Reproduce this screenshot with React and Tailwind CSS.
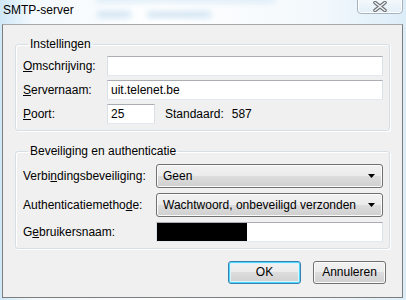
export default function App() {
  const inputCls =
    "flex items-center h-[20px] border border-t-[#abadb3] border-x-[#dbdfe6] border-b-[#e3e9ef] bg-white pl-[3px]";
  const selectCls =
    "flex h-[24px] w-[227px] items-center rounded-[3px] border border-[#707070] bg-[linear-gradient(#f2f2f2,#ebebeb_50%,#dddddd_50%,#cfcfcf)] pl-[6px] shadow-[inset_0_0_0_1px_#fbfbfb]";
  const Arrow = () => (
    <svg width="7" height="4" viewBox="0 0 7 4" className="mr-[7px]">
      <path d="M0 0H7L3.5 4Z" fill="#000" />
    </svg>
  );
  return (
    <div className="relative h-[300px] w-[406px] overflow-hidden bg-[linear-gradient(90deg,#cfe7f7,#f3f9fd_8%,#ffffff_40%,#f2f8fc_80%,#dcedf8)] font-['Liberation_Sans',Arial,sans-serif] text-[12px] leading-[15px] text-black">
      {/* blurred glass background */}
      <div className="absolute left-[95px] top-[-3px] h-[5px] w-[180px] rounded-full bg-[#d3e7f5] blur-[3px]" />
      <div className="absolute left-[97px] top-[12px] h-[5px] w-[34px] rounded-full bg-[#c4dcef] blur-[3px]" />
      <div className="absolute left-[147px] top-[12px] h-[5px] w-[64px] rounded-full bg-[#c4dcef] blur-[3px]" />

      {/* title bar */}
      <div className="flex h-[24px] items-start">
        <div className="pl-[3px] pt-[3px] text-[12px]">SMTP-server</div>
        <div className="ml-auto mr-[3px] mt-[-3px] flex h-[17px] w-[46px] items-center justify-center rounded-b-[4px] border border-[#a6b3c0] bg-[linear-gradient(#f6fafd,#e3eef7)] shadow-[inset_0_0_0_1px_#ffffff]">
          <svg width="14" height="11" viewBox="0 0 14 11" className="mt-[1px]">
            <path d="M2 1.5L12 9.5M12 1.5L2 9.5" stroke="#6e7277" strokeWidth="3.6" strokeLinecap="round" />
            <path d="M2 1.5L12 9.5M12 1.5L2 9.5" stroke="#f2f4f6" strokeWidth="1.4" strokeLinecap="round" />
          </svg>
        </div>
      </div>

      {/* client area */}
      <div className="ml-[2px] flex h-[274px] w-[401px] flex-col border border-[#7d7d7d] border-t-[#a8a8a8] bg-[#f0f0f0] px-[12px]">
        <fieldset className="mt-[12px] rounded-[3px] border border-[#d5dfe5] pb-[6px] pl-[7px] pr-[6px] pt-[4px] shadow-[inset_1px_1px_0_#ffffff,1px_1px_0_#ffffff]">
          <legend className="ml-[5px] px-[2px] leading-[15px]">Instellingen</legend>
          <div className="flex flex-col gap-[4px]">
            <div className="flex items-center">
              <div className="w-[84px]">
                <u>O</u>mschrijving:
              </div>
              <div className={inputCls + " w-[276px]"}></div>
            </div>
            <div className="flex items-center">
              <div className="w-[84px]">
                <u>S</u>ervernaam:
              </div>
              <div className={inputCls + " w-[276px]"}>uit.telenet.be</div>
            </div>
            <div className="flex items-center">
              <div className="w-[84px]">
                <u>P</u>oort:
              </div>
              <div className={inputCls + " w-[48px]"}>25</div>
              <div className="ml-[10px]">Standaard:</div>
              <div className="ml-[8px]">587</div>
            </div>
          </div>
        </fieldset>

        <fieldset className="mt-[13px] rounded-[3px] border border-[#d5dfe5] pb-[6px] pl-[7px] pr-[6px] pt-[5px] shadow-[inset_1px_1px_0_#ffffff,1px_1px_0_#ffffff]">
          <legend className="ml-[5px] px-[2px] leading-[15px]">Beveiliging en authenticatie</legend>
          <div className="flex flex-col gap-[5px]">
            <div className="flex items-center">
              <div className="w-[133px]">
                Verbi<u>n</u>dingsbeveiliging:
              </div>
              <div className={selectCls}>
                <span className="flex-1">Geen</span>
                <Arrow />
              </div>
            </div>
            <div className="flex items-center">
              <div className="w-[133px]">
                Authenticatiemetho<u>d</u>e:
              </div>
              <div className={selectCls}>
                <span className="flex-1">Wachtwoord, onbeveiligd verzonden</span>
                <Arrow />
              </div>
            </div>
            <div className="flex items-center">
              <div className="w-[133px]">
                G<u>e</u>bruikersnaam:
              </div>
              <div className="flex h-[20px] w-[227px] items-stretch border border-t-[#abadb3] border-x-[#dbdfe6] border-b-[#e3e9ef] bg-white">
                <div className="w-[90px] bg-black" />
              </div>
            </div>
          </div>
        </fieldset>

        <div className="mr-[4px] mt-[12px] flex justify-end gap-[12px]">
          <div className="flex h-[23px] w-[73px] items-center justify-center rounded-[3px] border border-[#3c7fb1] bg-[linear-gradient(#f2f2f2,#ebebeb_50%,#dddddd_50%,#cfcfcf)] shadow-[inset_0_0_0_1px_#48d8fb,inset_0_0_0_2px_#ddf3fc]">
            OK
          </div>
          <div className="flex h-[23px] w-[73px] items-center justify-center rounded-[3px] border border-[#707070] bg-[linear-gradient(#f2f2f2,#ebebeb_50%,#dddddd_50%,#cfcfcf)] shadow-[inset_0_0_0_1px_#fbfbfb]">
            Annuleren
          </div>
        </div>
      </div>
    </div>
  );
}
